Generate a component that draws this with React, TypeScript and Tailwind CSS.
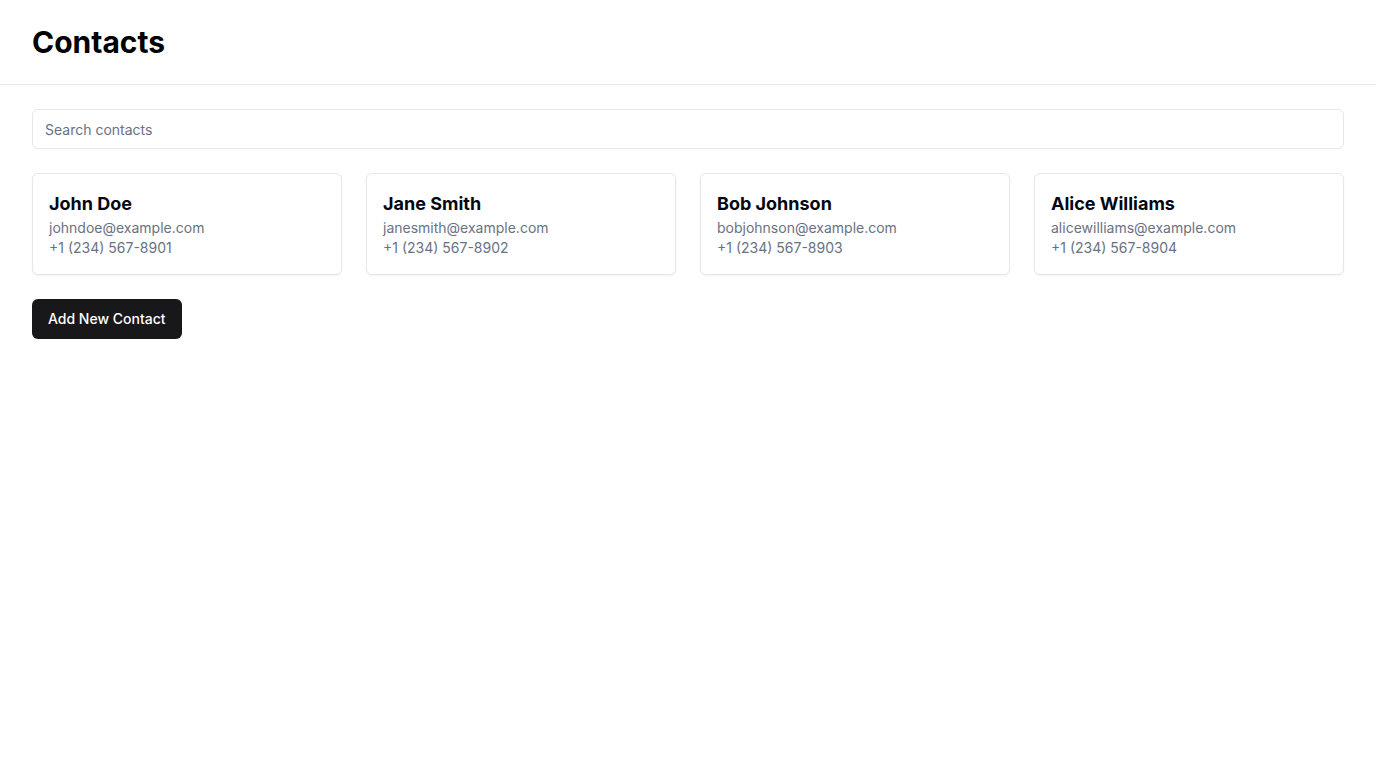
import { useState } from 'react';

type Contact = {
  name: string;
  email: string;
  phone: string;
};

const CONTACTS: Contact[] = [
  { name: 'John Doe', email: 'johndoe@example.com', phone: '+1 (234) 567-8901' },
  { name: 'Jane Smith', email: 'janesmith@example.com', phone: '+1 (234) 567-8902' },
  { name: 'Bob Johnson', email: 'bobjohnson@example.com', phone: '+1 (234) 567-8903' },
  { name: 'Alice Williams', email: 'alicewilliams@example.com', phone: '+1 (234) 567-8904' },
];

function ContactCard({ contact }: { contact: Contact }) {
  return (
    <div className="rounded-md border border-gray-200 bg-white p-4 shadow-xs">
      <h2 className="text-lg font-bold text-gray-950">{contact.name}</h2>
      <p className="text-sm text-gray-500">{contact.email}</p>
      <p className="text-sm text-gray-500">{contact.phone}</p>
    </div>
  );
}

export default function App() {
  const [query, setQuery] = useState('');

  const filtered = CONTACTS.filter((c) =>
    `${c.name} ${c.email} ${c.phone}`.toLowerCase().includes(query.toLowerCase())
  );

  return (
    <div className="min-h-screen bg-white font-['Inter',sans-serif] text-gray-950">
      {/* Header */}
      <header className="border-b border-gray-200 px-8 py-6">
        <h1 className="text-3xl font-bold text-black">Contacts</h1>
      </header>

      <main className="flex flex-col gap-6 px-8 py-6">
        {/* Search */}
        <input
          type="text"
          value={query}
          onChange={(e) => setQuery(e.target.value)}
          placeholder="Search contacts"
          className="h-10 w-full rounded-md border border-gray-200 bg-white px-3 text-sm placeholder:text-gray-500 focus:outline-none"
        />

        {/* Contact grid */}
        <div className="grid grid-cols-4 gap-6">
          {filtered.map((contact) => (
            <ContactCard key={contact.email} contact={contact} />
          ))}
        </div>

        <div>
          <button
            type="button"
            className="h-10 rounded-md bg-zinc-900 px-4 text-sm font-medium text-white"
          >
            Add New Contact
          </button>
        </div>
      </main>
    </div>
  );
}
